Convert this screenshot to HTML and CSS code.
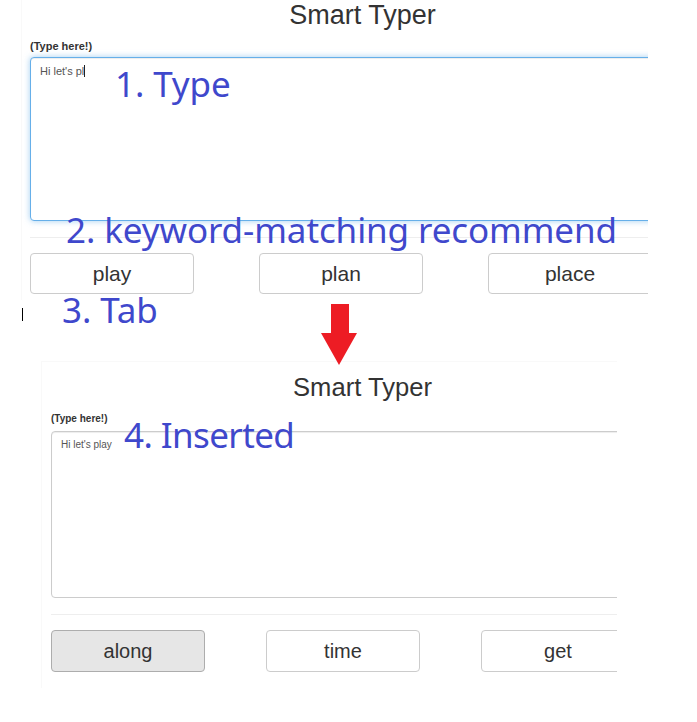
FILE: index.html
```html
<!DOCTYPE html>
<html>
<head>
<meta charset="utf-8">
<link rel="stylesheet" href="styles.css">
</head>
<body>
<div class="canvas">
  <section class="panel panel-one">
    <div class="panel-inner">
      <h1 class="title">Smart Typer</h1>
      <div class="label">(Type here!)</div>
      <div class="textbox focused">Hi let's pl<span class="caret"></span></div>
      <hr class="divider">
      <div class="buttons">
        <button class="btn">play</button>
        <button class="btn">plan</button>
        <button class="btn">place</button>
      </div>
    </div>
  </section>

  <section class="panel panel-two">
    <div class="panel-inner">
      <h1 class="title">Smart Typer</h1>
      <div class="label">(Type here!)</div>
      <div class="textbox">Hi let's play</div>
      <hr class="divider">
      <div class="buttons">
        <button class="btn active">along</button>
        <button class="btn">time</button>
        <button class="btn">get</button>
      </div>
    </div>
  </section>

  <div class="note note-1">1. Type</div>
  <div class="note note-2">2. keyword-matching recommend</div>
  <div class="note note-3">3. Tab</div>
  <div class="note note-4">4. Inserted</div>
  <div class="ibeam"></div>
  <svg class="arrow" width="38" height="62" viewBox="0 0 38 62">
    <polygon points="11,0 29,0 29,29 37,29 19,61 1,29 11,29" fill="#ed1c24"/>
  </svg>
</div>
</body>
</html>
```
FILE: styles.css
```css
* { box-sizing: border-box; }
html, body { margin: 0; padding: 0; background: #fff; }
body { font-family: "Liberation Sans", Arial, sans-serif; color: #333; }

.canvas {
  position: relative;
  width: 697px;
  height: 722px;
  overflow: hidden;
  background: #fff;
}

.panel {
  overflow: hidden;
  background: #fff;
  border-left: 1px solid #f9f9f9;
}
.panel-one {
  margin-left: 21px;
  width: 627px;
  height: 300px;
}
.panel-two {
  margin-top: 61px;
  margin-left: 41px;
  width: 576px;
  height: 327px;
  border-top: 1px solid #f9f9f9;
}

.panel-one .panel-inner { padding-left: 8px; width: 640px; }
.panel-two .panel-inner { padding-left: 9px; padding-top: 10px; width: 600px; }

.title {
  margin: 0;
  font-weight: normal;
  text-align: center;
  color: #333;
  line-height: 30px;
}
.panel-one .title { font-size: 27px; width: 665px; }
.panel-two .title { font-size: 25.6px; width: 623px; }

.label { font-weight: bold; color: #333; }
.panel-one .label { font-size: 11px; line-height: 13px; margin-top: 10px; }
.panel-two .label { font-size: 10px; line-height: 12px; margin-top: 11px; }

.textbox {
  border: 1px solid #ccc;
  border-radius: 4px;
  color: #555;
  background: #fff;
  box-shadow: inset 0 1px 1px rgba(0,0,0,.075);
}
.panel-one .textbox {
  margin-top: 4px;
  height: 164px;
  width: 680px;
  font-size: 11px;
  line-height: 14px;
  padding: 6px 9px;
}
.panel-two .textbox {
  margin-top: 6px;
  height: 167px;
  width: 640px;
  font-size: 10px;
  line-height: 13px;
  padding: 6px 9px;
}
.textbox.focused {
  border-color: #66afe9;
  box-shadow: inset 0 1px 1px rgba(0,0,0,.075), 0 0 6px rgba(102,175,233,.6);
}
.caret {
  display: inline-block;
  width: 1px;
  height: 12px;
  background: #222;
  vertical-align: -2px;
}

.divider {
  border: 0;
  border-top: 1px solid #eee;
  margin: 16px 0 15px 0;
  width: 680px;
}

.buttons { display: flex; }
.panel-one .buttons { gap: 65px; }
.panel-two .buttons { gap: 61px; }

.btn {
  flex: none;
  font-family: "Liberation Sans", Arial, sans-serif;
  color: #333;
  background: #fff;
  border: 1px solid #ccc;
  border-radius: 4px;
  padding: 0;
}
.panel-one .btn { width: 164px; height: 41px; font-size: 21px; }
.panel-two .btn { width: 154px; height: 42px; font-size: 20px; }
.btn.active { background: #e6e6e6; border-color: #adadad; }

.note {
  position: absolute;
  font-family: "Noto Sans", "Open Sans", sans-serif;
  color: #3f48cc;
  font-size: 35px;
  line-height: 40px;
  letter-spacing: -0.1px;
  white-space: nowrap;
}
.note-1 { left: 115px; top: 64px; }
.note-2 { left: 66px; top: 210px; }
.note-3 { left: 62px; top: 290px; }
.note-4 { left: 124px; top: 415px; letter-spacing: -0.6px; }

.ibeam {
  position: absolute;
  left: 22px;
  top: 308px;
  width: 1px;
  height: 13px;
  background: #000;
}

.arrow {
  position: absolute;
  left: 320px;
  top: 304px;
}
```
